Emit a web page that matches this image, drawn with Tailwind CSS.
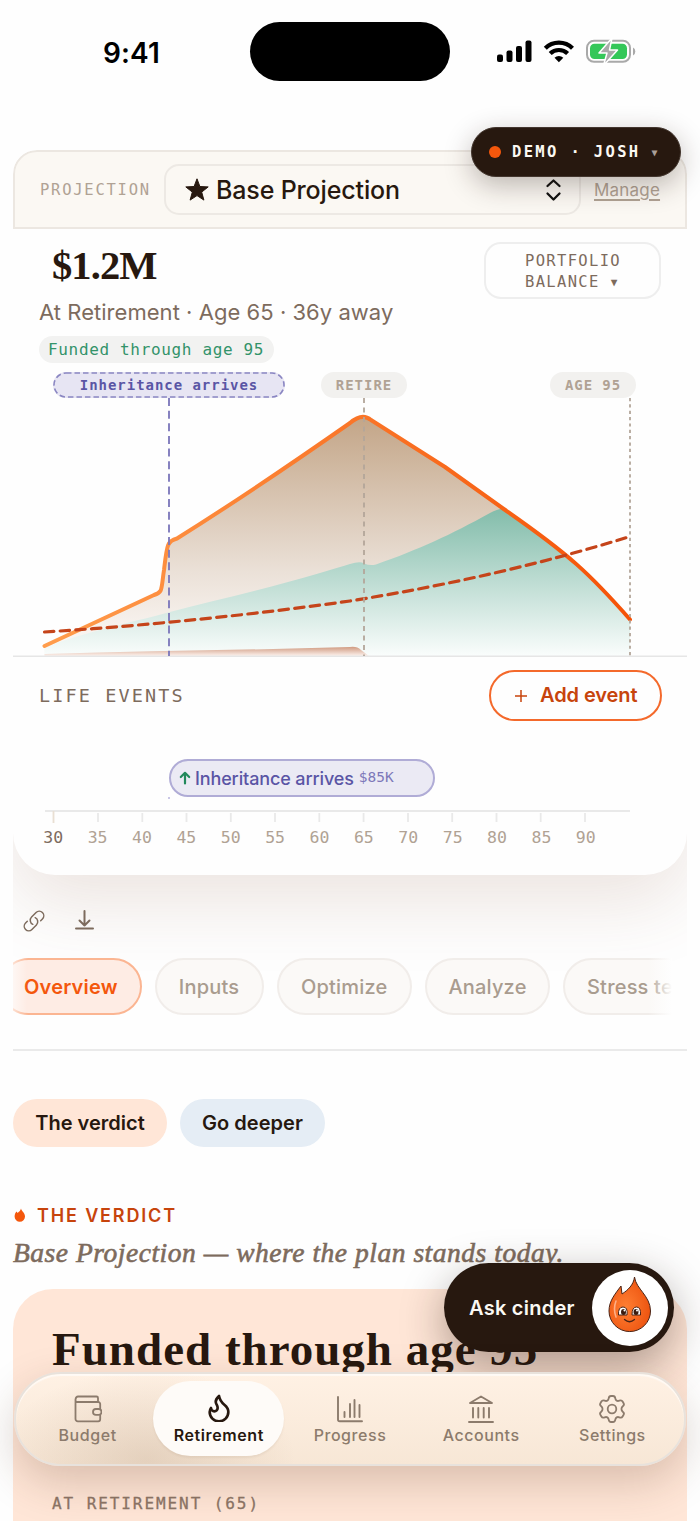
<!DOCTYPE html>
<html lang="en">
<head>
<meta charset="utf-8">
<title>Retirement projection</title>
<script src="https://cdn.jsdelivr.net/npm/@tailwindcss/browser@4"></script>
</head>
<body class="bg-[#fefefe]">
<div class="relative w-[700px] h-[1521px] overflow-hidden bg-[#fefefe] font-['Inter',sans-serif] text-[#27180f] whitespace-nowrap">

  <!-- Status bar -->
  <header class="h-[150px] pt-[22px] flex items-start">
    <div class="w-[250px] h-[59px] pl-[103px] pt-[2px] flex items-center text-[28px] font-semibold text-black tracking-[0.100px]">9:41</div>
    <div class="w-[200px] h-[59px] rounded-full bg-black"></div>
    <svg class="ml-[46px] mt-[16px]" width="142" height="28" viewBox="0 0 142 28">
      <rect x="1" y="16.500" width="6" height="7.500" rx="2"/><rect x="10.500" y="12.500" width="6" height="11.500" rx="2"/><rect x="20" y="8" width="6" height="16" rx="2"/><rect x="29.500" y="2.500" width="6" height="21.500" rx="2"/>
      <g fill="none" stroke="#000" stroke-width="4.200"><path d="M49.300 10.300a19 19 0 0 1 27.200 0"/><path d="M54.200 15.600a12.300 12.300 0 0 1 17.400 0"/></g>
      <path d="M62.900 24.200l-4.400-4.500a6.300 6.300 0 0 1 8.800 0z"/>
      <rect x="91" y="2.800" width="43" height="21" rx="7" fill="none" stroke="#a9a9a9" stroke-width="2"/>
      <path d="M137 9.500q2.300 1 2.300 4t-2.300 4z" fill="#a9a9a9"/>
      <rect x="94" y="5.700" width="37" height="15.400" rx="4.500" fill="#34c759"/>
      <path d="M116 0L103 15h8l-3.500 12.500L121.500 12h-8z" fill="#a9a9a9" stroke="#fff" stroke-width="1.500" stroke-linejoin="round"/>
    </svg>
  </header>

  <main class="mx-[13px]">
    <section class="overflow-hidden h-[901px] rounded-t-[24px] border-b-2 border-[#eaeaea]">
      <div class="h-[725px] rounded-t-[24px] rounded-b-[42px] bg-[#fefefe] shadow-[0_28px_72px_rgba(130,75,50,0.145)]">
        <!-- Projection picker -->
        <div class="h-[79px] rounded-t-[24px] border-2 border-[#ece7e1] bg-[#fbf8f3] flex items-center pl-[25px]">
          <span class="w-[124px] pt-[2px] font-['DejaVu_Sans_Mono',monospace] text-[15.500px] tracking-[1.750px] text-[#b0a294]">PROJECTION</span>
          <div class="w-[417px] h-[51px] rounded-[15px] border-2 border-[#ede9e4] flex items-center pl-[19px]">
            <svg width="24" height="24" viewBox="0 0 24 24" fill="#27180f"><path d="M12 .8l2.900 7.700 8.300.4-6.500 5.200 2.200 8-6.900-4.500-6.900 4.500 2.200-8L.8 8.900l8.300-.4z" stroke="#27180f" stroke-linejoin="round"/></svg>
            <span class="ml-[7px] pt-[2px] w-[328px] text-[25px] font-medium tracking-[-0.150px]">Base Projection</span>
            <svg width="18" height="24" viewBox="0 0 18 24" fill="none" stroke="#111" stroke-width="2.300" stroke-linecap="round" stroke-linejoin="round"><path d="M3.500 8L9.500 2.500 15.500 8M3.500 15.500L9.500 21.500 15.500 15.500"/></svg>
          </div>
          <span class="ml-[13px] pt-[2px] text-[17px] tracking-[0.200px] text-[#b0a294] underline underline-offset-[3px] decoration-[1.500px]">Manage</span>
        </div>

        <!-- Headline figures -->
        <div class="h-[143px] pl-[26px] pr-[26px] flex justify-between">
          <div>
            <div class="h-[60px] pl-[13px] pt-[16px] font-['Liberation_Serif',serif] font-bold text-[40.500px] leading-[42px] tracking-[-0.900px]">$1.2M</div>
            <div class="h-[47px] flex items-center text-[22px] tracking-[0.040px] text-[#7d6b5d]">At Retirement · Age 65 · 36y away</div>
            <div class="w-[235px] h-[27px] rounded-full bg-[#f2f2f1] pl-[9px] flex items-center font-['DejaVu_Sans_Mono',monospace] text-[16px] tracking-[0.660px] text-[#33936a]">Funded through age 95</div>
          </div>
          <div class="mt-[13px] w-[177px] h-[57px] rounded-[17px] border-2 border-[#eeeeee] pl-[39px] pt-[2px] flex flex-col justify-center font-['DejaVu_Sans_Mono',monospace] text-[15.500px] leading-[21px] tracking-[1.330px] text-[#7d6b5d]"><span>PORTFOLIO</span><span class="flex items-center">BALANCE<span class="ml-[11px] text-[11px]">▼</span></span></div>
        </div>
        <div class="h-[26px] pl-[40px] flex font-['DejaVu_Sans_Mono',monospace] text-[14px] font-bold">
          <span class="w-[232px] rounded-full bg-[#e7e5f3] flex items-center justify-center"><svg class="absolute" width="232" height="26"><rect x="1" y="1" width="230" height="24" rx="12" fill="none" stroke="#8a86c2" stroke-width="1.600" stroke-dasharray="5.500 3"/></svg><span class="tracking-[0.960px] text-[#5a55a5]">Inheritance arrives</span></span>
          <span class="ml-[36px] w-[86px] rounded-full bg-[#f2f1ef] flex items-center justify-center tracking-[1px] text-[#b0a294]">RETIRE</span>
          <span class="ml-[143px] w-[86px] rounded-full bg-[#f2f1ef] flex items-center justify-center tracking-[0.900px] text-[#b0a294]">AGE 95</span>
        </div>

        <!-- Balance chart -->
        <svg class="block" width="674" height="259" viewBox="13 398 674 259" fill="none">
          <defs>
            <linearGradient id="taxable" gradientUnits="userSpaceOnUse" x1="0" y1="417" x2="0" y2="656"><stop stop-color="#c3a587"/><stop offset=".65" stop-color="#ebe1d8"/><stop offset="1" stop-color="#fefbf9"/></linearGradient>
            <linearGradient id="invested" gradientUnits="userSpaceOnUse" x1="0" y1="508" x2="0" y2="656"><stop stop-color="#82bcaa"/><stop offset="1" stop-color="#fafdfc"/></linearGradient>
            <linearGradient id="cash" x1="0" y1="0" x2="0" y2="1"><stop stop-color="#d09a80"/><stop offset="1" stop-color="#fdf3ef"/></linearGradient>
            <linearGradient id="total" gradientUnits="userSpaceOnUse" x1="45" y1="0" x2="630" y2="0"><stop stop-color="#ff9d4d"/><stop offset="1" stop-color="#f55207"/></linearGradient>
          </defs>
          <path d="M44.500 646L154 595C163 592 161 590 164 570C167 545 167 541 177 538.500C240 499 290 465 350 423C358 416 365 415 371 420L445 467L503 508.500V656H44.500z" fill="url(#taxable)"/>
          <path d="M44.500 648C80 633 130 623 168 612.500C220 599 270 588 320 573Q340 567 350 564T364 563.500Q370 566 376 564.500C420 549 450 535 490 513Q497 509 503 508.500C570 555 590 574 630 619.500V656H44.500z" fill="url(#invested)"/>
          <path d="M44.500 654C150 651 250 650 350 647Q357 646 361 650L369 656H44.500z" fill="url(#cash)"/>
          <path d="M13 656.300h674" stroke="#e6e6e6" stroke-width="1.600"/>
          <path d="M44.500 646L154 595C163 592 161 590 164 570C167 545 167 541 177 538.500C240 499 290 465 350 423C358 416 365 415 371 420L445 467L503 508.500C570 555 590 574 630 619.500" stroke="url(#total)" stroke-width="4" stroke-linecap="round" stroke-linejoin="round"/>
          <path d="M44.500 632C150 625.500 258 614 350 601Q500 577 630 536.500" stroke="#c5441a" stroke-width="3.200" stroke-linecap="round" stroke-dasharray="9.400 6.300"/>
          <path d="M169 398v258" stroke="#7a75ba" stroke-width="1.800" stroke-dasharray="8 4.640"/>
          <path d="M364 398v258" stroke="#b3a69a" stroke-width="1.800" stroke-dasharray="5 4.500"/>
          <path d="M630 398v258" stroke="#b3a69a" stroke-width="1.800" stroke-dasharray="3.200 3.150"/>
        </svg>

        <!-- Life events -->
        <div class="h-[76px] pl-[26px] pr-[25px] flex items-center justify-between">
          <span class="pt-[1px] font-['DejaVu_Sans_Mono',monospace] text-[18.500px] tracking-[2.100px] text-[#7d6b5d]">LIFE EVENTS</span>
          <span class="w-[173px] h-[51px] rounded-full border-2 border-[#f4692b] pl-[23px] flex items-center text-[20px] font-semibold tracking-[-0.080px] text-[#c7440c]"><svg class="mt-[2px] mr-[12px]" width="14" height="14" stroke="#c7440c" stroke-width="1.500"><path d="M1 7h12M7 1v12"/></svg>Add event</span>
        </div>
        <div class="pl-[156px] pt-[26px] h-[77px]">
          <div class="w-[266px] h-[38px] rounded-full border-2 border-[#b0acd6] bg-[#ebeaf4] pl-[8px] flex items-center text-[18px] font-medium text-[#5a55a5] tracking-[-0.130px]"><svg class="mr-[4px]" width="12" height="14" fill="none" stroke="#22895b" stroke-width="2.200" stroke-linecap="round" stroke-linejoin="round"><path d="M6 12.500V1.800M1.800 6L6 1.800 10.200 6"/></svg>Inheritance arrives<span class="ml-[5px] font-['DejaVu_Sans_Mono',monospace] text-[14.500px] font-normal tracking-[0px] text-[#7d78b9]">$85K</span></div>
          <div class="w-[2px] h-[2px] -ml-px bg-[#c9c6e6]"></div>
        </div>
        <svg class="block" width="674" height="14" viewBox="13 810 674 14" stroke-width="1.800"><path d="M45 811h585" stroke="#e9e9e9"/><path d="M53.500 811v12" stroke="#e9dfd3"/><path d="M98 813v9M142.300 813v9M186.500 813v9M230.800 813v9M275 813v9M319.300 813v9M363.600 813v9M408 813v9M452.200 813v9M496.500 813v9M540.700 813v9M585 813v9" stroke="#e9e9e9"/></svg>
        <div class="ml-[18px] w-[577px] h-[29px] grid grid-cols-13 items-center text-center font-['DejaVu_Sans_Mono',monospace] text-[16.500px] text-[#b0a294]">
          <span class="text-[#7d6b5d]">30</span><span>35</span><span>40</span><span>45</span><span>50</span><span>55</span><span>60</span><span>65</span><span>70</span><span>75</span><span>80</span><span>85</span><span>90</span>
        </div>
      </div>

      <div class="h-[83px] pt-[34px] pl-[9px] flex items-start gap-[28px]">
        <svg width="24" height="24" viewBox="0 0 24 24" fill="none" stroke="#7d6b5d" stroke-width="1.500" stroke-linecap="round" stroke-linejoin="round"><path d="M13.190 8.688a4.500 4.500 0 0 1 1.242 7.244l-4.500 4.500a4.500 4.500 0 0 1-6.364-6.364l1.757-1.757m13.350-.622 1.757-1.757a4.500 4.500 0 0 0-6.364-6.364l-4.500 4.500a4.500 4.500 0 0 0 1.242 7.244"/></svg>
        <svg width="22" height="24" viewBox="0 0 22 24" fill="none" stroke="#7d6b5d" stroke-width="2" stroke-linecap="round" stroke-linejoin="round"><path d="M10.500 2v14.500M5.500 11.500l5 5 5-5M2 19.500h17"/></svg>
      </div>
      <div class="relative -ml-[13px] w-[672px] overflow-hidden flex gap-[13px] text-[20px] font-medium tracking-[0.200px] text-[#a99c8f]">
        <span class="shrink-0 w-[141.500px] h-[57px] rounded-full border-2 border-[#fbb592] bg-[#feece4] pl-[22px] flex items-center font-semibold tracking-[0.200px] text-[#f4570c]">Overview</span>
        <span class="shrink-0 w-[109px] h-[57px] rounded-full border-2 border-[#f1edea] bg-[#fbf9f7] flex items-center justify-center">Inputs</span>
        <span class="shrink-0 w-[135.500px] h-[57px] rounded-full border-2 border-[#f1edea] bg-[#fbf9f7] flex items-center justify-center">Optimize</span>
        <span class="shrink-0 w-[125px] h-[57px] rounded-full border-2 border-[#f1edea] bg-[#fbf9f7] flex items-center justify-center">Analyze</span>
        <span class="shrink-0 w-[150px] h-[57px] rounded-full border-2 border-[#f1edea] bg-[#fbf9f7] pl-[22px] flex items-center">Stress test</span>
        <span class="absolute inset-y-0 right-0 w-[24px] bg-linear-to-r from-[#fefefe]/0 to-[#fefefe]"></span>
        <span class="absolute inset-y-0 left-[13px] w-[14px] bg-linear-to-r from-[#fefefe]/60 to-[#fefefe]/0"></span>
      </div>
    </section>

    <div class="mt-[48px] h-[48px] flex gap-[13px] text-[20px] font-semibold tracking-[0.020px]">
      <span class="w-[154px] rounded-full bg-[#ffe6d7] flex items-center justify-center">The verdict</span>
      <span class="w-[145px] rounded-full bg-[#e5edf5] flex items-center justify-center">Go deeper</span>
    </div>
    <div class="mt-[54px] h-[28px] flex items-center text-[18px] font-semibold tracking-[1.850px] text-[#c7440c]">
      <svg class="ml-[1px] mr-[11px]" width="12" height="14" viewBox="0 0 12 14" fill="#f4570c"><path d="M7 .5C7.400 3 11 4.700 11 8.500a5.200 5.200 0 0 1-10.400 0C.6 6.300 1.500 4.800 2.500 3.600L3.700 5C4.800 3.800 6.500 2.800 7 .5z"/></svg>THE VERDICT</div>
    <div class="h-[60px] pt-[8px] font-['Liberation_Serif',serif] italic text-[27.500px] leading-[32px] tracking-[0.530px] text-[#7d6b5d] [-webkit-text-stroke:0.6px_#7d6b5d]">Base Projection — where the plan stands today.</div>
    <section class="h-[260px] rounded-t-[40px] bg-[#ffe6d7] pl-[39px] pt-[34px]">
      <h1 class="font-['Liberation_Serif',serif] font-bold text-[47px] leading-[52px] tracking-[1px]">Funded through age 95</h1>
      <p class="mt-[117px] font-['DejaVu_Sans_Mono',monospace] text-[16px] tracking-[1.920px] text-[#8c7567] [-webkit-text-stroke:0.3px_#8c7567]">AT RETIREMENT (65)</p>
    </section>
  </main>

  <!-- Account switcher -->
  <div class="absolute left-[471px] top-[127px] w-[210px] h-[50px] rounded-full bg-[#27180f] border border-[#43362e] shadow-[0_8px_28px_rgba(39,24,15,0.3)] pl-[17px] flex items-center font-['DejaVu_Sans_Mono',monospace] text-[15.500px] font-semibold tracking-[2.350px] text-[#fbf8f3]">
    <span class="size-[12px] rounded-full bg-[#f4570c] mr-[11px]"></span><span class="pt-[1px]">DEMO · JOSH</span><span class="ml-[11px] text-[10px] font-normal text-[#a99f98]">▼</span>
  </div>

  <!-- Assistant -->
  <div class="absolute left-[444px] top-[1263px] w-[230px] h-[89px] rounded-full bg-[#27180f] shadow-[0_14px_44px_rgba(39,24,15,0.38)] pl-[25px] flex items-center text-[20px] font-semibold tracking-[0.250px] text-[#fbf8f3]">
    <span class="w-[123px]">Ask cinder</span>
    <span class="size-[76px] rounded-full bg-white pb-[7px] flex items-center justify-center">
      <svg width="46" height="60" viewBox="0 0 46 60">
        <defs><radialGradient id="ember" cx=".4" cy=".55" r=".6"><stop stop-color="#ff7f33"/><stop offset="1" stop-color="#ed5410"/></radialGradient></defs>
        <path d="M27.500 3C29 15 43.500 22 43.500 37A20.700 20.500 0 0 1 2 37C2 27 8 20 14 12L15 20C21 16 26.500 11 27.500 3z" fill="url(#ember)" stroke="#4a2416" stroke-width="1"/>
        <path d="M9 27Q6 35 9 43" stroke="#ffae85" stroke-width="1.600" fill="none" stroke-linecap="round"/>
        <g stroke="#4a2416" stroke-width="1"><path d="M11.500 41Q11 33 16 33T20 41z" fill="#fff"/><path d="M25 41Q25 33 29.500 33T33.500 41z" fill="#fff"/></g>
        <ellipse cx="16.500" cy="38" rx="2.500" ry="3" fill="#3b1c10"/><ellipse cx="29" cy="38" rx="2.500" ry="3" fill="#3b1c10"/><circle cx="17.500" cy="36.600" r="1" fill="#fff"/><circle cx="30" cy="36.600" r="1" fill="#fff"/>
        <path d="M17.500 45.500Q22.500 50 27.500 45.500" stroke="#4a2416" stroke-width="1.300" fill="none" stroke-linecap="round"/>
      </svg>
    </span>
  </div>

  <!-- Tab bar -->
  <nav class="absolute left-[14px] top-[1372px] w-[672px] h-[94px] rounded-full border-2 border-[#e8e2dc] bg-linear-to-b from-[#fff1e4] to-[#f7e7d6] shadow-[0_16px_44px_rgba(80,45,25,0.22),inset_0_2px_1px_#fffaf5] px-[6px] grid grid-cols-5 items-center text-[16px] font-medium tracking-[0.550px] text-[#8c7b6c]">
    <div class="absolute inset-0 rounded-full bg-[radial-gradient(ellipse_150px_90px_at_130px_85px,rgba(120,80,45,0.15),transparent)]"></div>
    <div class="relative h-[75px] pt-[13px] flex flex-col items-center">
      <svg width="28" height="28" viewBox="0 0 28 28" fill="none" stroke="#8c7b6c" stroke-width="1.800" stroke-linejoin="round"><path d="M1.500 4v20a2.300 2.300 0 0 0 2.300 2.300h20.400a2 2 0 0 0 2-2v-4.500M26.200 14V9a2 2 0 0 0-2-2H3.500a2 2 0 0 1-2-2.500Q2 1.500 4 1.500h18.500a1.500 1.500 0 0 1 1.500 1.500v4"/><rect x="19" y="14" width="8.500" height="5.800" rx="2.900"/></svg>
      <span class="leading-[24px]">Budget</span>
    </div>
    <div class="relative h-[75px] -top-px pt-[13px] rounded-full bg-[#fefbf8] shadow-[0_2px_2px_rgba(120,90,60,0.08)] flex flex-col items-center text-[#27180f] font-semibold tracking-[0.600px]">
      <svg width="28" height="28" viewBox="1.500 1.500 21 21" fill="none" stroke="#27180f" stroke-width="2" stroke-linecap="round" stroke-linejoin="round"><path d="M8.500 14.500A2.500 2.500 0 0 0 11 12c0-1.380-.5-2-1-3-1.072-2.143-.224-4.054 2-6 .5 2.500 2 4.900 4 6.500 2 1.600 3 3.500 3 5.500a7 7 0 1 1-14 0c0-1.153.433-2.294 1-3a2.500 2.500 0 0 0 2.500 2.500z"/></svg>
      <span class="pt-[1px] leading-[24px]">Retirement</span>
    </div>
    <div class="relative h-[75px] pt-[13px] flex flex-col items-center">
      <svg width="28" height="28" viewBox="0 0 28 28" fill="none" stroke="#8c7b6c" stroke-width="1.900" stroke-linecap="round" stroke-linejoin="round"><path d="M2 2v22.500q0 1.800 1.800 1.800H26M8.500 17v5M14 9v13M18.500 5v17M23.500 10v12"/></svg>
      <span class="leading-[24px]">Progress</span>
    </div>
    <div class="relative h-[75px] pt-[13px] flex flex-col items-center">
      <svg width="28" height="28" viewBox="0 0 28 28" fill="none" stroke="#8c7b6c" stroke-width="1.900" stroke-linecap="round" stroke-linejoin="round"><path d="M14 1.500L25 8H3zM6 13v9.500M11.300 13v9.500M16.700 13v9.500M22 13v9.500M2 27h24"/></svg>
      <span class="leading-[24px]">Accounts</span>
    </div>
    <div class="relative h-[75px] pt-[13px] flex flex-col items-center">
      <svg width="28" height="28" viewBox="0 0 28 28" fill="none" stroke="#8c7b6c" stroke-width="1.800" stroke-linejoin="round"><circle cx="14" cy="14" r="4.300"/><path d="M10.700 3.300Q11 1 13 1h2q2 0 2.300 2.300c.3 2.200 2 3.200 4 2.400q2.300-.9 3.300.8l1 1.700q1 1.800-.8 3.100c-1.800 1.400-1.800 4 0 5.400q1.800 1.300.8 3.100l-1 1.700q-1 1.700-3.300.8c-2-.8-3.700.2-4 2.400Q17 27 15 27h-2q-2 0-2.300-2.300c-.3-2.200-2-3.200-4-2.400q-2.300.9-3.300-.8l-1-1.700q-1-1.800.8-3.100c1.800-1.400 1.800-4 0-5.400q-1.800-1.300-.8-3.100l1-1.700q1-1.700 3.300-.8c2 .8 3.700-.2 4-2.400z"/></svg>
      <span class="leading-[24px]">Settings</span>
    </div>
  </nav>
</div>
</body>
</html>
